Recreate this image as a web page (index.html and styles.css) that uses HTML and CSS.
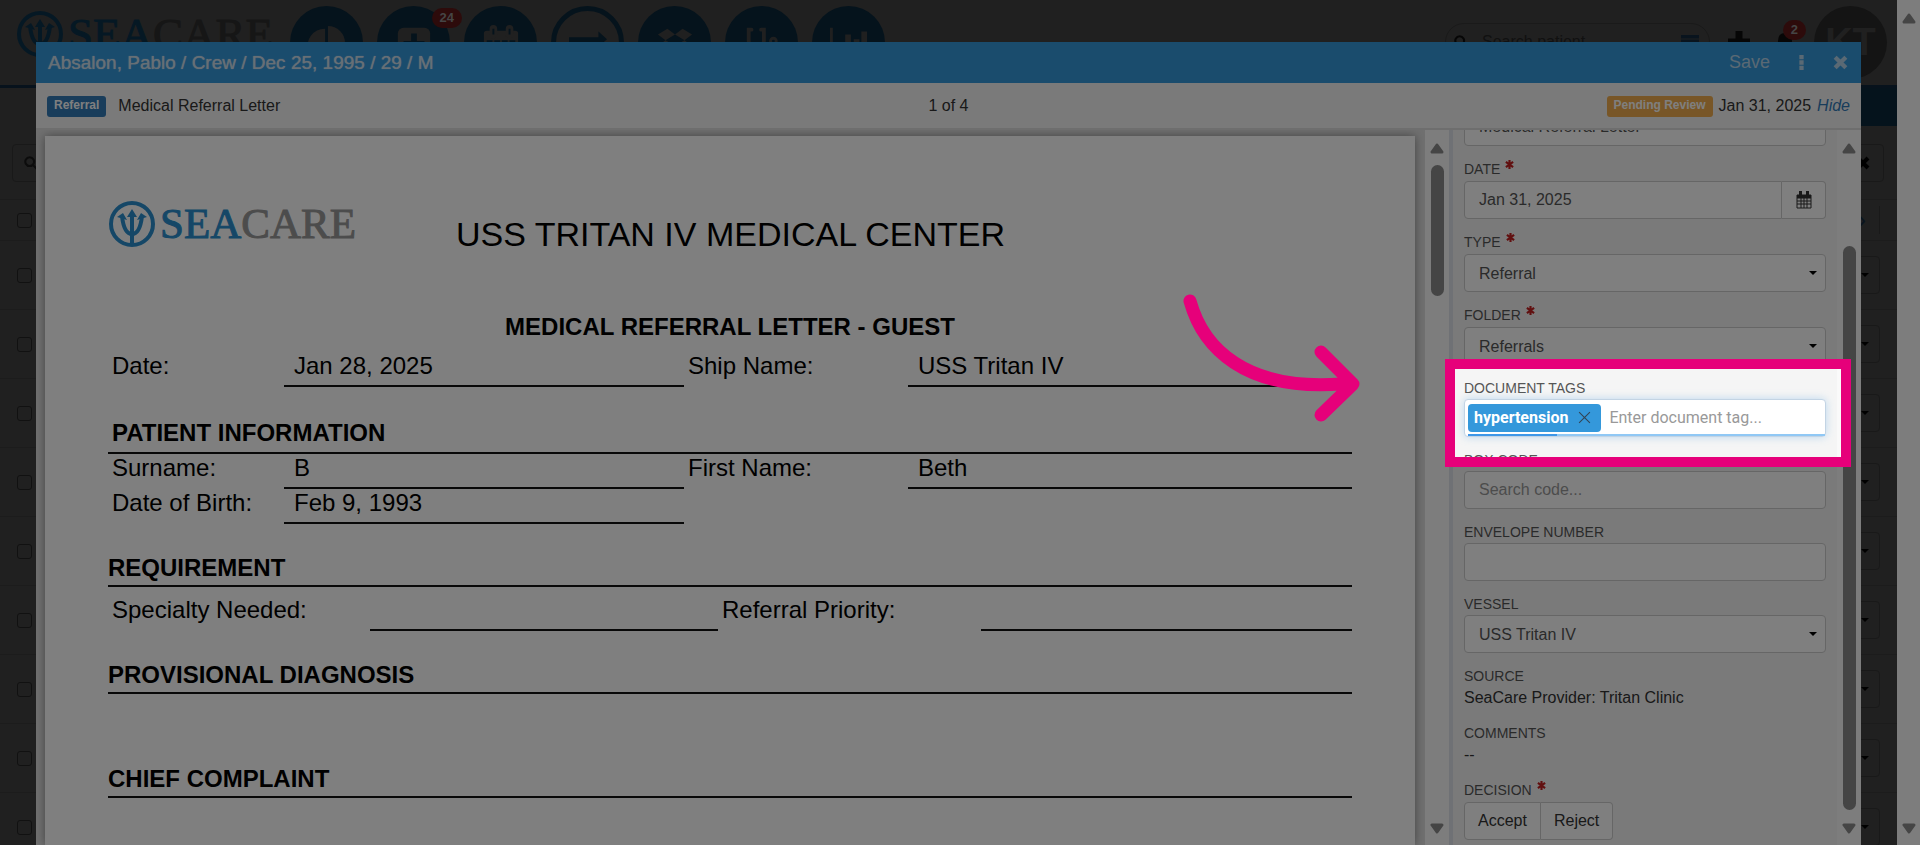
FILE: index.html
```
<!DOCTYPE html>
<html lang="en">
<head>
    <meta charset="UTF-8">
    <meta name="viewport" content="width=device-width, initial-scale=1.0">
    <title>SeaCare - Medical Referral Letter</title>
    <link rel="stylesheet" href="styles.css">
</head>
<body>
    <!-- shared symbols -->
    <svg class="defs" width="0" height="0" aria-hidden="true">
        <symbol id="trident" viewBox="0 0 48 48">
            <circle cx="24" cy="24" r="21" fill="none" stroke="currentColor" stroke-width="4"/>
            <path d="M24 12v33" fill="none" stroke="currentColor" stroke-width="4"/>
            <path d="M24 9l5 8H19zM9 17l6-4 4 7zM39 17l-6-4-4 7z" fill="currentColor"/>
            <path d="M14 16q2 18 10 18q8 0 10-18" fill="none" stroke="currentColor" stroke-width="4"/>
        </symbol>
        <symbol id="star" viewBox="0 0 10 10">
            <path d="M5 0v10M1 2l8 6M1 8l8-6" stroke="currentColor" stroke-width="2.400"/>
        </symbol>
        <symbol id="search" viewBox="0 0 16 16">
            <path d="M6.500 1.500a5 5 0 1 0 .01 0M10.500 10.500l4 4" fill="none" stroke="currentColor" stroke-width="2.400"/>
        </symbol>
        <symbol id="times" viewBox="0 0 14 14">
            <path d="M2 2l10 10M12 2L2 12" stroke="currentColor" stroke-width="4"/>
        </symbol>
        <symbol id="up" viewBox="0 0 14 11">
            <path d="M7 2L2 9h10z" fill="currentColor" stroke="currentColor" stroke-width="3" stroke-linejoin="round"/>
        </symbol>
        <symbol id="down" viewBox="0 0 14 11">
            <path d="M7 9L2 2h10z" fill="currentColor" stroke="currentColor" stroke-width="3" stroke-linejoin="round"/>
        </symbol>
    </svg>

    <div class="page">
        <div class="app">
            <header class="app-header">
                <div class="brand"><svg><use href="#trident"/></svg><span><b>SEA</b>CARE</span></div>
                <nav class="app-nav">
                    <a href="#" class="circle" aria-label="Dashboard">
                        <svg viewBox="0 0 40 40"><path d="M18 5v18l12 13A18 18 0 1 1 18 5z" fill="currentColor"/><path d="M21 2a18 18 0 0 1 18 18H21z" fill="currentColor"/></svg>
                    </a>
                    <a href="#" class="circle" aria-label="Medical">
                        <svg viewBox="0 0 40 40"><rect x="3" y="4" width="34" height="34" rx="6" fill="currentColor"/><path d="M20 10v22M9 21h22" stroke="#0a2638" stroke-width="6"/></svg>
                        <span class="count">24</span>
                    </a>
                    <a href="#" class="circle" aria-label="Calendar">
                        <svg viewBox="0 0 40 40"><path d="M2 10q0-3 3-3h30q3 0 3 3v28H2z" fill="currentColor"/><path d="M12 5v6M29 5v6" stroke="currentColor" stroke-width="8" stroke-linecap="round"/><path d="M12 5v6M29 5v6" stroke="#0a2638" stroke-width="2"/><path d="M5 17h6v6H5zM13 17h6v6h-6zM21 17h6v6h-6zM29 17h6v6h-6z" fill="#0a2638"/></svg>
                    </a>
                    <a href="#" class="circle ring" aria-label="Transfer">
                        <svg viewBox="0 0 40 40"><path d="M0 14h31V8l9 8-9 8v-5H0z" fill="currentColor"/></svg>
                    </a>
                    <a href="#" class="circle" aria-label="Packages">
                        <svg viewBox="0 0 40 40"><path d="M12 5l8 6-10 6-8-6zM28 5l10 6-8 6-10-6zM10 17l10 6-8 6-10-6zM30 17l8 6-10 6-8-6z" fill="currentColor"/></svg>
                    </a>
                    <a href="#" class="circle" aria-label="Clinic">
                        <svg viewBox="0 0 40 40"><path d="M9 6H6v12q0 9 8 9t8-9V6h-3M14 27q0 9 9 9t9-9v-6" fill="none" stroke="currentColor" stroke-width="4" stroke-linecap="round"/><circle cx="32" cy="18" r="3" fill="none" stroke="currentColor" stroke-width="3"/></svg>
                    </a>
                    <a href="#" class="circle" aria-label="Reports">
                        <svg viewBox="0 0 40 40"><path d="M0 4h3v31h37v3H0zM16 11h6v22h-6zM25 16h6v17h-6zM33 8h6v25h-6z" fill="currentColor"/></svg>
                    </a>
                </nav>
                <div class="app-tools">
                    <label class="patient-search">
                        <svg class="icon"><use href="#search"/></svg>
                        <input type="text" placeholder="Search patient" aria-label="Search patient">
                        <svg class="card" viewBox="0 0 18 14"><path d="M0 0h18v14H0z" fill="#12283c"/><path d="M0 4h18" stroke="#404040"/></svg>
                    </label>
                    <button class="tool" aria-label="Add"><svg viewBox="0 0 22 22"><path d="M11 0v22M0 11h22" stroke="currentColor" stroke-width="7"/></svg></button>
                    <button class="tool" aria-label="Notifications"><svg viewBox="0 0 22 22"><path d="M3 18q1-2 1-8 0-8 7-8t7 8q0 6 1 8z" fill="currentColor"/></svg><span class="count">2</span></button>
                    <span class="avatar">KT</span>
                </div>
            </header>
            <div class="subnav"></div>
            <div class="filters">
                <button class="filter-box" aria-label="Search"><svg class="icon"><use href="#search"/></svg></button>
                <button class="filter-box end" aria-label="Clear"><svg class="icon"><use href="#times"/></svg></button>
            </div>
            <div class="list-row head"><input type="checkbox" aria-label="Select all"><span class="next">&rsaquo;</span></div>
            <div class="list-row"><input type="checkbox" aria-label="Row 1"><button class="drop" aria-label="Actions"></button></div>
            <div class="list-row"><input type="checkbox" aria-label="Row 2"><button class="drop" aria-label="Actions"></button></div>
            <div class="list-row"><input type="checkbox" aria-label="Row 3"><button class="drop" aria-label="Actions"></button></div>
            <div class="list-row"><input type="checkbox" aria-label="Row 4"><button class="drop" aria-label="Actions"></button></div>
            <div class="list-row"><input type="checkbox" aria-label="Row 5"><button class="drop" aria-label="Actions"></button></div>
            <div class="list-row"><input type="checkbox" aria-label="Row 6"><button class="drop" aria-label="Actions"></button></div>
            <div class="list-row"><input type="checkbox" aria-label="Row 7"><button class="drop" aria-label="Actions"></button></div>
            <div class="list-row"><input type="checkbox" aria-label="Row 8"><button class="drop" aria-label="Actions"></button></div>
            <div class="list-row"><input type="checkbox" aria-label="Row 9"><button class="drop" aria-label="Actions"></button></div>
        </div>
        <div class="scrollbar"><svg><use href="#up"/></svg><svg><use href="#down"/></svg></div>
    </div>

    <div class="modal" role="dialog" aria-labelledby="modalTitle">
        <div class="modal-header">
            <h1 id="modalTitle">Absalon, Pablo / Crew / Dec 25, 1995 / 29 / M</h1>
            <button class="save">Save</button>
            <button aria-label="More"><svg viewBox="0 0 14 14"><path d="M5 0h4v4H5zM5 5h4v4H5zM5 10h4v4H5z" fill="currentColor"/></svg></button>
            <button aria-label="Close"><svg><use href="#times"/></svg></button>
        </div>
        <div class="modal-bar">
            <div class="bar-left"><span class="badge blue">Referral</span>Medical Referral Letter</div>
            <div>1 of 4</div>
            <div class="bar-right"><span class="badge orange">Pending Review</span>Jan 31, 2025 <a href="#">Hide</a></div>
        </div>
        <div class="modal-body">
            <div class="viewer">
                <article class="paper">
                    <div class="paper-head">
                        <div class="brand"><svg><use href="#trident"/></svg><span><b>SEA</b>CARE</span></div>
                        <h2>USS TRITAN IV MEDICAL CENTER</h2>
                    </div>
                    <h3 class="letter-title">MEDICAL REFERRAL LETTER - GUEST</h3>
                    <div class="line tall"><span>Date:</span><span class="value">Jan 28, 2025</span><span>Ship Name:</span><span class="value">USS Tritan IV</span></div>
                    <h3 class="section indent">PATIENT INFORMATION</h3>
                    <div class="line"><span>Surname:</span><span class="value">B</span><span>First Name:</span><span class="value">Beth</span></div>
                    <div class="line"><span>Date of Birth:</span><span class="value">Feb 9, 1993</span></div>
                    <h3 class="section">REQUIREMENT</h3>
                    <div class="line tall wide"><span>Specialty Needed:</span><span class="value"></span><span>Referral Priority:</span><span class="value"></span></div>
                    <h3 class="section">PROVISIONAL DIAGNOSIS</h3>
                    <div class="blank"></div>
                    <h3 class="section">CHIEF COMPLAINT</h3>
                </article>
            </div>
            <div class="scrollbar"><svg><use href="#up"/></svg><span class="thumb short"></span><svg><use href="#down"/></svg></div>
            <form class="panel">
                <div class="field">
                    <label for="title">TITLE <svg><use href="#star"/></svg></label>
                    <input type="text" id="title" value="Medical Referral Letter">
                </div>
                <div class="field required">
                    <label for="date">DATE <svg><use href="#star"/></svg></label>
                    <div class="date-group">
                        <input type="text" id="date" value="Jan 31, 2025">
                        <button type="button" aria-label="Pick date"><svg viewBox="0 0 16 18"><path d="M1 4h14v13H1zM4 1v4M12 1v4M1 7h14M1 10h14M1 13h14M5 7v10M8 7v10M11 7v10" fill="none" stroke="#333" stroke-width="1"/><path d="M1 4h14v3H1zM3 0h3v5H3zM10 0h3v5h-3z" fill="#333"/></svg></button>
                    </div>
                </div>
                <div class="field required">
                    <label for="type">TYPE <svg><use href="#star"/></svg></label>
                    <div class="select"><select id="type"><option>Referral</option></select></div>
                </div>
                <div class="field required">
                    <label for="folder">FOLDER <svg><use href="#star"/></svg></label>
                    <div class="select"><select id="folder"><option>Referrals</option></select></div>
                </div>
                <div class="field">
                    <label for="tags">DOCUMENT TAGS</label>
                    <div class="tags">
                        <span class="tag">hypertension <button type="button" aria-label="Remove"><svg viewBox="0 0 12 12"><path d="M1 1l10 10M11 1L1 11" stroke="currentColor"/></svg></button></span>
                        <input type="text" id="tags" placeholder="Enter document tag...">
                        <span class="progress"></span>
                    </div>
                </div>
                <div class="field">
                    <label for="box">BOX CODE</label>
                    <input type="text" id="box" placeholder="Search code...">
                </div>
                <div class="field">
                    <label for="envelope">ENVELOPE NUMBER</label>
                    <input type="text" id="envelope">
                </div>
                <div class="field">
                    <label for="vessel">VESSEL</label>
                    <div class="select"><select id="vessel"><option>USS Tritan IV</option></select></div>
                </div>
                <div class="field static">
                    <span class="label">SOURCE</span>
                    <p>SeaCare Provider: Tritan Clinic</p>
                </div>
                <div class="field static">
                    <span class="label">COMMENTS</span>
                    <p>--</p>
                </div>
                <div class="field required">
                    <span class="label">DECISION <svg><use href="#star"/></svg></span>
                    <div class="btn-group"><button type="button">Accept</button><button type="button">Reject</button></div>
                </div>
            </form>
            <div class="scrollbar"><svg><use href="#up"/></svg><span class="thumb long"></span><svg><use href="#down"/></svg></div>
        </div>
    </div>

    <!-- tour step -->
    <div class="spotlight"></div>
    <svg class="tour-arrow" viewBox="0 0 178 130">
        <path d="M7 8C20 55 62 98 158 91M138 59l32 32-32 31" fill="none" stroke="#e6007a" stroke-width="13" stroke-linecap="round" stroke-linejoin="round"/>
    </svg>
</body>
</html>
```
FILE: styles.css
```
* {
    box-sizing: border-box;
}
body {
    margin: 0;
    height: 100vh;
    overflow: hidden;
    font-family: "Liberation Sans", Arial, sans-serif;
    font-size: 16px;
    color: #333;
    background: #fff;
}
h1, h2, h3, p {
    margin: 0;
}
button, input, select {
    font: inherit;
    color: inherit;
}
button {
    border: 0;
    padding: 0;
    background: none;
}
.defs {
    position: absolute;
}

/* dimmed app behind the dialog */
.page {
    display: flex;
    height: 100vh;
}
.app {
    flex: 1;
    min-width: 0;
    overflow: hidden;
    background: #404040;
    color: #181818;
}
.app-header {
    display: flex;
    align-items: flex-start;
    height: 88px;
    padding: 6px 10px 0 16px;
    border-bottom: 3px solid #0e2438;
}
.brand {
    display: flex;
    align-items: center;
    gap: 4px;
    font-family: "Liberation Serif", "Times New Roman", serif;
    font-size: 45px;
    line-height: 48px;
    color: #2c2c2c;
    -webkit-text-stroke: 1px currentColor;
}
.brand svg {
    width: 48px;
    height: 48px;
    color: #0b3048;
}
.brand b {
    font-weight: normal;
    color: #0b3048;
}
.app-header .brand {
    width: 274px;
    padding-top: 4px;
}
.app-nav {
    display: flex;
    gap: 14px;
}
.circle {
    position: relative;
    display: flex;
    align-items: center;
    justify-content: center;
    width: 73px;
    height: 73px;
    border-radius: 50%;
    background: #0a2638;
    color: #404040;
}
.circle svg {
    width: 38px;
    height: 38px;
}
.ring {
    background: none;
    border: 5px solid #0a2638;
    color: #0a2638;
}
.count {
    position: absolute;
    top: 2px;
    right: -12px;
    padding: 0 8px;
    border-radius: 10px;
    background: #5a1616;
    color: #8a8a8a;
    font-size: 13px;
    font-weight: bold;
    line-height: 20px;
}
.app-tools {
    display: flex;
    gap: 18px;
    margin-left: auto;
    color: #0c0c0c;
}
.patient-search {
    display: flex;
    align-items: center;
    gap: 14px;
    width: 265px;
    height: 38px;
    margin-top: 17px;
    padding: 0 10px 0 8px;
    border: 1px solid #343434;
    border-radius: 19px;
}
.patient-search input {
    flex: 1;
    min-width: 0;
    border: 0;
    padding: 0;
    background: none;
}
.patient-search input::placeholder {
    color: #222;
    opacity: 1;
}
.icon {
    width: 14px;
    height: 14px;
}
.card {
    width: 18px;
    height: 14px;
}
.tool {
    position: relative;
    height: 22px;
    width: 22px;
    margin-top: 25px;
    color: #0c0c0c;
}
.tool + .tool {
    margin-left: 6px;
}
.tool svg {
    display: block;
}
.tool .count {
    top: -11px;
    right: -10px;
}
.avatar {
    width: 73px;
    height: 73px;
    border-radius: 50%;
    background: #282828;
    color: #404040;
    font-size: 38px;
    font-weight: bold;
    line-height: 73px;
    text-align: center;
}
.subnav {
    height: 38px;
    margin-left: 36px;
    background: #0a2638;
}
.filters {
    display: flex;
    justify-content: space-between;
    height: 73px;
    padding: 18px 13px 0 12px;
}
.filter-box {
    display: flex;
    align-items: center;
    width: 60px;
    height: 38px;
    padding: 0 11px;
    border: 1px solid #333;
    border-radius: 4px;
}
.filter-box.end {
    justify-content: flex-end;
    padding-right: 13px;
    color: #000;
}
.list-row {
    display: flex;
    align-items: center;
    justify-content: space-between;
    height: 69px;
    padding: 0 17px;
    border-top: 1px solid #393939;
}
.list-row.head {
    height: 41px;
}
.list-row input {
    appearance: none;
    width: 15px;
    height: 15px;
    margin: 0;
    border: 1px solid #222;
    border-radius: 3px;
}
.next {
    padding: 0 13px;
    border-right: 1px solid #333;
    color: #12283c;
    font-size: 24px;
}
.drop {
    display: flex;
    align-items: center;
    justify-content: flex-end;
    width: 60px;
    height: 38px;
    padding-right: 10px;
    border: 1px solid #333;
    border-radius: 4px;
}
.drop::after,
.select::after {
    content: "";
    border: 4px solid transparent;
    border-top-color: #000;
    border-bottom: 0;
}

/* scrollbars */
.scrollbar {
    display: flex;
    flex-direction: column;
    flex: none;
    width: 24px;
    padding: 13px 0 11px;
    align-items: center;
    background: #fafafa;
    color: #8a8a8a;
}
.page > .scrollbar {
    width: 23px;
}
.scrollbar svg {
    flex: none;
    width: 14px;
    height: 11px;
}
.scrollbar svg:last-child {
    margin-top: auto;
}
.thumb {
    width: 13px;
    border-radius: 7px;
    background: #8a8a8a;
}
.thumb.short {
    height: 19%;
    margin-top: 11px;
}
.thumb.long {
    flex: 1;
    margin: 92px 0 13px;
}

/* dialog */
.modal {
    position: fixed;
    top: 42px;
    right: 59px;
    bottom: 0;
    left: 36px;
    display: flex;
    flex-direction: column;
    background: #f5f5f5;
}
.modal-header {
    display: flex;
    align-items: center;
    gap: 24px;
    height: 41px;
    padding: 0 13px 0 12px;
    background: #3498db;
    color: #cfdfeb;
}
.modal-header h1 {
    flex: 1;
    font-size: 19px;
    font-weight: normal;
    text-shadow: 0 0 1px #cfdfeb;
}
.modal-header .save {
    font-size: 18px;
    color: #b5d3e8;
}
.modal-header button {
    color: #b5d3e8;
}
.modal-header svg {
    display: block;
    width: 15px;
    height: 15px;
}
.modal-bar {
    display: grid;
    grid-template-columns: 1fr auto 1fr;
    align-items: center;
    height: 47px;
    padding: 1px 11px 0;
    border-bottom: 2px solid #dcdcdc;
    background: #f5f5f5;
}
.bar-left,
.bar-right {
    display: flex;
    align-items: center;
    gap: 12px;
}
.bar-right {
    gap: 6px;
    justify-content: flex-end;
}
.bar-right a {
    color: #337ab7;
    font-style: italic;
    text-decoration: none;
}
.badge {
    height: 21px;
    padding: 0 7px;
    border-radius: 3px;
    color: #fff;
    font-size: 12px;
    font-weight: bold;
    line-height: 18px;
}
.blue {
    background: #337ab7;
}
.orange {
    background: #f0ad4e;
}
.modal-body {
    display: flex;
    flex: 1;
    min-height: 0;
}
.viewer {
    flex: 1;
    min-width: 0;
    padding: 6px 10px 0 9px;
    overflow: hidden;
    background: #e0e0e0;
}
.paper {
    height: 100%;
    padding: 64px 63px 0;
    background: #fff;
    box-shadow: 0 0 9px rgba(0, 0, 0, 0.4);
    color: #000;
    font-size: 24px;
    line-height: 28px;
}
.paper-head {
    display: flex;
    align-items: flex-start;
    gap: 100px;
}
.paper .brand {
    color: #999;
    font-size: 43px;
}
.paper .brand svg,
.paper .brand b {
    color: #2b8fce;
}
.paper h2 {
    padding-top: 10px;
    font-size: 34px;
    font-weight: normal;
    line-height: 48px;
}
.paper h3 {
    font-size: 24px;
}
.letter-title {
    margin: 55px 0 2px;
    text-align: center;
}
.line {
    display: grid;
    grid-template-columns: 176fr 400fr 224fr 444fr;
}
.line.wide {
    grid-template-columns: 262fr 348fr 263fr 371fr;
}
.line span {
    min-height: 35px;
    padding: 0 4px 5px;
}
.line.tall span {
    min-height: 44px;
    padding-top: 9px;
}
.line .value {
    padding-left: 10px;
    border-bottom: 2px solid #111;
}
.section {
    margin-top: 30px;
    padding-bottom: 3px;
    border-bottom: 2px solid #111;
}
.section.indent {
    margin-top: 32px;
    padding: 0 4px 5px;
}
.blank {
    height: 41px;
}

/* side form, scrolled to its end */
.panel {
    display: flex;
    flex-direction: column;
    justify-content: flex-end;
    flex: none;
    width: 388px;
    padding: 0 11px 5px;
    overflow: hidden;
    border-left: 4px solid #dfe3ea;
    color: #444;
}
.field {
    flex: none;
    margin-bottom: 14px;
}
.field:last-child {
    margin-bottom: 0;
}
.field label,
.label {
    display: flex;
    gap: 5px;
    height: 20px;
    font-size: 14px;
    line-height: 19px;
    color: #555;
}
.required label,
.required .label {
    height: 21px;
}
.field label svg,
.label svg {
    width: 9px;
    height: 9px;
    color: #c32020;
}
.field input,
.field select {
    display: block;
    width: 100%;
    height: 38px;
    padding: 0 14px;
    border: 1px solid #ccc;
    border-radius: 4px;
    background: #fff;
    color: #555;
    appearance: none;
}
.field input::placeholder {
    color: #999;
    opacity: 1;
}
.select {
    position: relative;
}
.select::after {
    position: absolute;
    top: 17px;
    right: 9px;
}
.date-group {
    display: flex;
}
.date-group input {
    border-radius: 4px 0 0 4px;
}
.date-group button {
    display: flex;
    align-items: center;
    justify-content: center;
    flex: none;
    width: 44px;
    border: 1px solid #ccc;
    border-left: 0;
    border-radius: 0 4px 4px 0;
    background: #fff;
}
.date-group svg {
    width: 16px;
    height: 18px;
}
.tags {
    position: relative;
    display: flex;
    align-items: center;
    height: 38px;
    padding: 0 0 1px 3px;
    border: 1px solid #c3d4e4;
    border-radius: 4px;
    background: #fff;
    box-shadow: 0 0 8px rgba(102, 175, 233, 0.4);
    font-family: Roboto, sans-serif;
}
.tag {
    display: flex;
    align-items: center;
    gap: 10px;
    height: 28px;
    padding: 0 10px 0 6px;
    border-radius: 4px;
    background: #3498db;
    color: #fff;
    font-weight: bold;
}
.tag button {
    color: #345;
}
.tag svg {
    display: block;
    width: 13px;
    height: 13px;
}
.field .tags input {
    flex: 1;
    width: auto;
    min-width: 0;
    height: 30px;
    padding: 0 8px;
    border: 0;
}
.progress {
    position: absolute;
    right: 0;
    bottom: 0;
    left: 3px;
    height: 2px;
    background: linear-gradient(to right, #3d97e8 25%, #90c8f5 25%);
}
.static {
    margin-bottom: 16px;
}
.static p {
    height: 21px;
    line-height: 21px;
    color: #333;
}
.btn-group {
    display: flex;
}
.btn-group button {
    height: 38px;
    padding: 0 13px;
    border: 1px solid #ccc;
    border-radius: 4px 0 0 4px;
    background: #fff;
    color: #333;
}
.btn-group button + button {
    border-left: 0;
    border-radius: 0 4px 4px 0;
}

/* tour step */
.spotlight {
    position: fixed;
    top: 359px;
    right: 69px;
    width: 406px;
    height: 108px;
    border: 10px solid #e6007a;
    box-shadow: 0 0 0 9999px rgba(0, 0, 0, 0.5);
    pointer-events: none;
}
.tour-arrow {
    position: fixed;
    top: 293px;
    right: 559px;
    width: 178px;
    height: 130px;
    pointer-events: none;
}
```
